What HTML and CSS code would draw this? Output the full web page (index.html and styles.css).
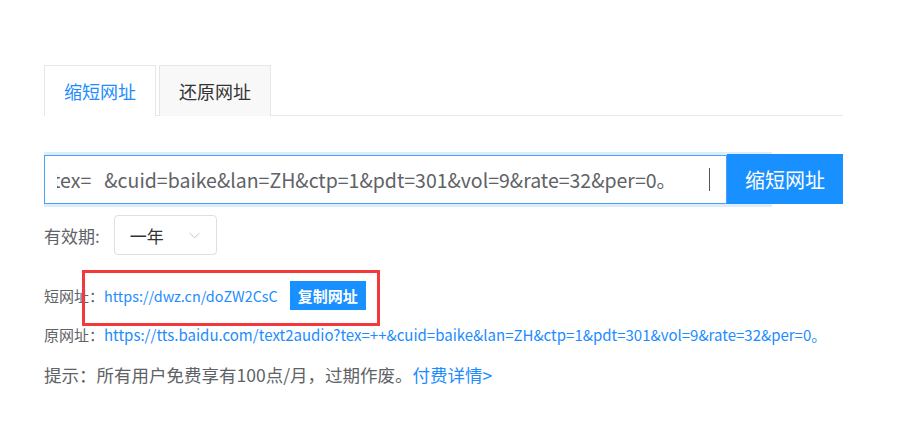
FILE: index.html
```html
<!DOCTYPE html>
<html>
    <head>
        <meta charset="utf-8" />
        <title>短网址</title>
        <link rel="stylesheet" href="styles.css">
    </head>

    <body>
        <div class="m-dwz">
            <div class="tabs">
                <span class="tab curr">缩短网址</span>
                <span class="tab">还原网址</span>
            </div>

            <div class="form">
                <div class="ipt">
                    <div class="ipt-txt"><span>tex=&nbsp;&nbsp;&nbsp;&amp;cuid=baike&amp;lan=ZH&amp;ctp=1&amp;pdt=301&amp;vol=9&amp;rate=32&amp;per=0。</span><i class="caret"></i></div>
                </div>
                <button class="btn">缩短网址</button>
            </div>

            <div class="expire">
                <label>有效期:</label>
                <div class="sel">
                    <span>一年</span>
                    <svg width="11" height="7" viewBox="0 0 11 7"><path d="M0.5 0.8 L5.5 5.8 L10.5 0.8" fill="none" stroke="#c0c4cc" stroke-width="1"/></svg>
                </div>
            </div>

            <div class="res">
                <p class="line short">短网址：<a>https://dwz.cn/doZW2CsC</a><span class="copy">复制网址</span></p>
                <p class="line">原网址：<a>https://tts.baidu.com/text2audio?tex=++&amp;cuid=baike&amp;lan=ZH&amp;ctp=1&amp;pdt=301&amp;vol=9&amp;rate=32&amp;per=0。</a></p>
                <div class="mark"></div>
            </div>

            <p class="tip">提示：所有用户免费享有100点/月，过期作废。<a>付费详情&gt;</a></p>
        </div>
    </body>
</html>
```

FILE: styles.css
```css
*{margin:0;padding:0;box-sizing:border-box;}
body{font-family:"Microsoft YaHei","Noto Sans CJK SC",sans-serif;color:#606266;background:#fff;}
a{color:#1c8cff;text-decoration:none;}

.m-dwz{width:799px;margin-left:44px;padding-top:65px;}

/* tabs */
.tabs{display:flex;gap:3px;height:51px;border-bottom:1px solid #e8e8e8;}
.tab{display:flex;align-items:center;justify-content:center;width:112px;height:51px;border:1px solid #e6e6e6;border-bottom:none;background:#f8f8f8;font-size:18px;color:#333;}
.tab.curr{background:#fff;color:#1c8cff;height:51px;margin-bottom:-1px;}

/* input */
.form{display:flex;height:50px;margin-top:38px;}
.ipt{flex:1;height:49px;margin-top:1px;border:1px solid #4aa2f8;background:#fff;padding:0 15px 0 12px;box-shadow:0 -3px 0 #deedfc,45px -3px 0 #deedfc,0 3px 0 #deedfc,45px 3px 0 #deedfc;}
.ipt-txt{display:flex;align-items:center;height:100%;overflow:hidden;white-space:nowrap;font-size:19.5px;color:#606266;}
.ipt-txt span{margin-left:-4px;}
.caret{display:inline-block;width:1px;height:23px;margin-left:33px;background:#555;}
.btn{position:relative;z-index:1;width:116px;height:50px;border:none;background:#1890ff;color:#fff;font-family:inherit;font-size:20px;}

/* expire */
.expire{display:flex;align-items:center;margin-top:11px;font-size:17px;}
.expire label{margin-right:14px;}
.sel{display:flex;align-items:center;justify-content:space-between;width:103px;height:40px;padding:0 16px 0 15px;border:1px solid #dcdfe6;border-radius:4px;color:#333;}

/* result */
.res{position:relative;margin-top:26px;}
.line{display:flex;align-items:center;font-size:15px;color:#606266;white-space:nowrap;}
.short{height:29px;}
.short a{font-size:14.4px;}
.copy{display:inline-block;height:29px;line-height:29px;margin-left:12px;padding:0 8px;background:#1890ff;color:#fff;font-size:15px;font-weight:bold;}
.line + .line{margin-top:14px;}
.mark{position:absolute;left:38px;top:-11px;width:298px;height:56px;border:3px solid #f4393c;}

.tip{margin-top:17px;font-size:17.5px;color:#606266;}
```
